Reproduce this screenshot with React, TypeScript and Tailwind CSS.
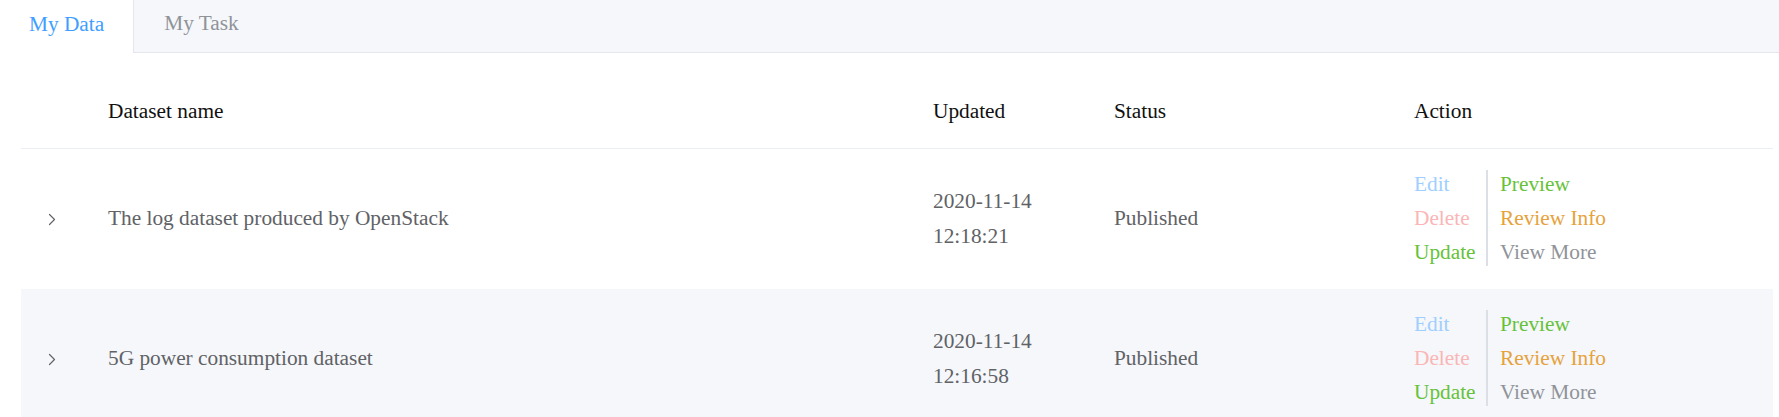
import React from 'react';

type Row = {
  name: string;
  date: string;
  time: string;
  status: string;
};

const rows: Row[] = [
  { name: 'The log dataset produced by OpenStack', date: '2020-11-14', time: '12:18:21', status: 'Published' },
  { name: '5G power consumption dataset', date: '2020-11-14', time: '12:16:58', status: 'Published' },
];

const Chevron: React.FC = () => (
  <svg width="8" height="13" viewBox="0 0 8 13" fill="none">
    <path d="M1.5 1.5L6.5 6.5L1.5 11.5" stroke="#606266" strokeWidth="1.2" strokeLinecap="round" strokeLinejoin="round" />
  </svg>
);

const cols = 'grid grid-cols-[87px_825px_181px_300px_1fr]';

const App: React.FC = () => {
  return (
    <div className="[font-family:'Liberation_Serif']">
      <div className="min-h-screen bg-white text-[21.33px]">
        {/* Tabs */}
        <div className="flex h-[53px]">
          <div className="flex items-center px-[29px] pb-1 bg-white border-r border-[#e4e7ed] text-[#409eff]">
            My Data
          </div>
          <div className="flex-1 flex items-center px-[30px] pb-1 bg-[#f5f7fa] border-b border-[#e4e7ed] text-[#909399]">
            My Task
          </div>
        </div>

        {/* Table */}
        <div className="mt-[23px] ml-[21px] mr-[6px]">
          <div className={`${cols} h-[73px] items-center border-b border-[#ebeef5] text-[#111]`}>
            <div />
            <div>Dataset name</div>
            <div>Updated</div>
            <div>Status</div>
            <div>Action</div>
          </div>

          {rows.map((row, i) => (
            <div
              key={row.name}
              className={`${cols} h-[140px] items-center text-[#606266] ${i % 2 === 1 ? 'bg-[#f5f7fa]' : 'bg-white'}`}
            >
              <div className="flex pl-[27px]">
                <Chevron />
              </div>
              <div>{row.name}</div>
              <div className="leading-[35px]">
                <div>{row.date}</div>
                <div>{row.time}</div>
              </div>
              <div>{row.status}</div>
              <div className="flex items-center leading-[34px] -mt-[2px]">
                <div className="flex flex-col w-[72px]">
                  <span className="text-[#a0cfff]">Edit</span>
                  <span className="text-[#fab6b6]">Delete</span>
                  <span className="text-[#67c23a]">Update</span>
                </div>
                <div className="w-[2px] h-[96px] bg-[#dcdfe6]" />
                <div className="flex flex-col pl-[12px]">
                  <span className="text-[#67c23a]">Preview</span>
                  <span className="text-[#e6a23c]">Review Info</span>
                  <span className="text-[#909399]">View More</span>
                </div>
              </div>
            </div>
          ))}
        </div>
      </div>
    </div>
  );
};

export default App;
